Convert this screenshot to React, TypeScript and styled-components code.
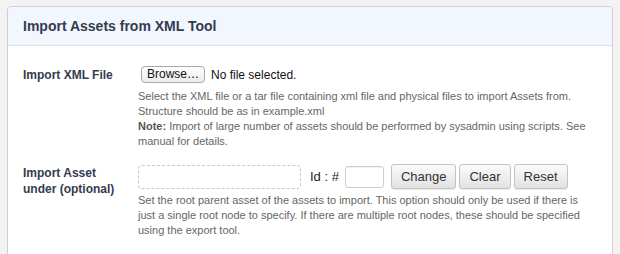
import React from "react";
import styled, { createGlobalStyle } from "styled-components";

const Global = createGlobalStyle`
  html, body { margin: 0; padding: 0; background: #f3f3f3; }
  body { font-family: "Liberation Sans", Arial, sans-serif; }
`;

const Page = styled.div`
  padding: 6px 7px 0 7px;
  width: 606px;
  height: 254px;
  overflow: hidden;
`;

const Panel = styled.div`
  background: #fff;
  border: 1px solid #cfcfcf;
  border-radius: 4px 4px 0 0;
  height: 300px;
`;

const Header = styled.div`
  height: 38px;
  background: #f2f6fe;
  border-bottom: 1px solid #dcdfe6;
  border-radius: 4px 4px 0 0;
  display: flex;
  align-items: center;
  padding-left: 15px;
`;

const Title = styled.h2`
  margin: 0;
  font-size: 14px;
  font-weight: bold;
  color: #333c4e;
  padding-bottom: 1px;
`;

const Body = styled.div`
  display: grid;
  grid-template-columns: 115px 1fr;
  row-gap: 15px;
  padding: 20px 0 0 15px;
`;

const Label = styled.div`
  font-size: 12px;
  font-weight: bold;
  color: #333c4e;
  line-height: 16px;
  padding-top: ${(p: { $top: number }) => p.$top}px;
`;

const Field = styled.div`
  display: flex;
  flex-direction: column;
`;

const Controls = styled.div`
  display: flex;
  align-items: center;
`;

const NativeButton = styled.button`
  height: 17px;
  padding: 0 5px;
  font-family: "Liberation Sans", Arial, sans-serif;
  font-size: 12px;
  color: #111;
  background: linear-gradient(#ffffff, #ececec);
  border: 1px solid #a9a9a9;
  border-radius: 4px;
  line-height: 15px;
  margin-left: 3px;
`;

const NoFile = styled.span`
  font-size: 12px;
  color: #111;
  margin-left: 6px;
`;

const Help = styled.div`
  font-size: 11px;
  line-height: 15px;
  color: #666;
  margin-top: ${(p: { $gap: number }) => p.$gap}px;
  white-space: nowrap;
  b { color: #555; }
`;

const AssetBox = styled.div`
  width: 161px;
  height: 22px;
  border: 1px dashed #c9c9c9;
  border-radius: 4px;
`;

const IdLabel = styled.span`
  font-size: 13px;
  color: #222;
  margin-left: 9px;
`;

const IdInput = styled.input`
  width: 37px;
  height: 20px;
  margin: 0 0 0 6px;
  padding: 0;
  border: 1px solid #ccc;
  border-radius: 3px;
  box-shadow: inset 0 1px 1px rgba(0, 0, 0, 0.06);
`;

const ActionButton = styled.button`
  height: 25px;
  padding: 0 9px;
  margin-left: ${(p: { $ml: number }) => p.$ml}px;
  font-family: "Liberation Sans", Arial, sans-serif;
  font-size: 13px;
  color: #333;
  background: linear-gradient(#fbfbfb, #e2e2e2);
  border: 1px solid #c3c3c3;
  border-radius: 3px;
  box-shadow: 0 1px 1px rgba(0, 0, 0, 0.08);
`;

export default function App() {
  return (
    <>
      <Global />
      <Page>
        <Panel>
          <Header>
            <Title>Import Assets from XML Tool</Title>
          </Header>
          <Body>
            <Label $top={1}>Import XML File</Label>
            <Field>
              <Controls>
                <NativeButton>Browse…</NativeButton>
                <NoFile>No file selected.</NoFile>
              </Controls>
              <Help $gap={6}>
                Select the XML file or a tar file containing xml file and physical files to import Assets from.
                <br />
                Structure should be as in example.xml
                <br />
                <b>Note:</b> Import of large number of assets should be performed by sysadmin using scripts. See
                <br />
                manual for details.
              </Help>
            </Field>
            <Label $top={1}>
              Import Asset
              <br />
              under (optional)
            </Label>
            <Field>
              <Controls>
                <AssetBox />
                <IdLabel>Id : #</IdLabel>
                <IdInput />
                <ActionButton $ml={7}>Change</ActionButton>
                <ActionButton $ml={3}>Clear</ActionButton>
                <ActionButton $ml={3}>Reset</ActionButton>
              </Controls>
              <Help $gap={4}>
                Set the root parent asset of the assets to import. This option should only be used if there is
                <br />
                just a single root node to specify. If there are multiple root nodes, these should be specified
                <br />
                using the export tool.
              </Help>
            </Field>
          </Body>
        </Panel>
      </Page>
    </>
  );
}
